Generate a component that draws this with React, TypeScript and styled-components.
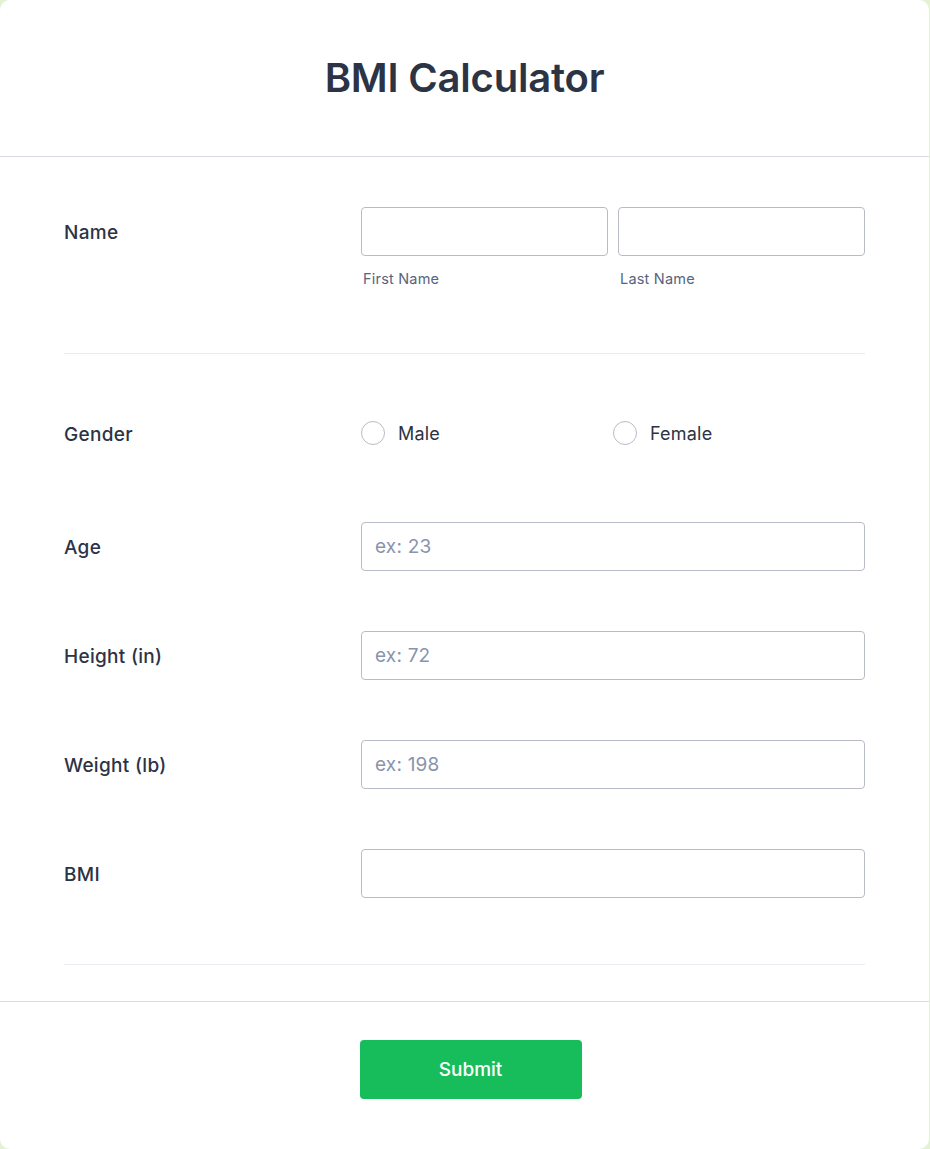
import React from "react";
import styled, { createGlobalStyle } from "styled-components";

const Global = createGlobalStyle`
  html, body { margin: 0; padding: 0; background: #e3f2d3; }
  body { font-family: Inter, "Noto Sans", sans-serif; color: #2c3345; }
  * { box-sizing: border-box; }
`;

const Card = styled.div`
  width: 929px;
  min-height: 1148px;
  background: #fff;
  border-radius: 10px;
  display: flex;
  flex-direction: column;
`;

const Header = styled.header`
  height: 157px;
  border-bottom: 1px solid #d8dae3;
  display: flex;
  align-items: center;
  justify-content: center;
`;

const Title = styled.h1`
  margin: 0 0 2px 0;
  font-size: 40px;
  font-weight: 600;
  color: #2c3345;
  letter-spacing: -0.2px;
`;

const Body = styled.div`
  padding: 50px 64px 0;
  display: flex;
  flex-direction: column;
`;

const Row = styled.div<{ $mt?: number }>`
  display: grid;
  grid-template-columns: 297px 504px;
  align-items: start;
  margin-top: ${(p) => p.$mt ?? 0}px;
`;

const Label = styled.label`
  font-size: 19px;
  font-weight: 500;
  letter-spacing: 0.3px;
  color: #2c3345;
  height: 48px;
  display: flex;
  align-items: center;
  padding-top: 2px;
`;

const Field = styled.div`
  display: flex;
  flex-direction: column;
`;

const Pair = styled.div`
  display: grid;
  grid-template-columns: 1fr 1fr;
  column-gap: 10px;
`;

const Input = styled.input`
  width: 100%;
  height: 49px;
  border: 1px solid #b8bcc6;
  border-radius: 4px;
  padding: 0 13px;
  font-family: Inter, sans-serif;
  font-size: 19px;
  letter-spacing: 0.2px;
  color: #2c3345;
  background: #fff;
  outline: none;
  &::placeholder { color: #8894ab; }
`;

const SubLabel = styled.span`
  margin-top: 14px;
  padding-left: 2px;
  font-size: 14.5px;
  letter-spacing: 0.2px;
  color: #57647e;
  line-height: 17px;
`;

const Divider = styled.hr<{ $mt: number }>`
  margin: ${(p) => p.$mt}px 0 0;
  border: none;
  border-top: 1px solid #eaebf0;
  height: 0;
`;

const Radios = styled.div`
  display: grid;
  grid-template-columns: 1fr 1fr;
  height: 48px;
  align-items: center;
`;

const RadioOption = styled.label`
  display: flex;
  align-items: center;
  gap: 13px;
  font-size: 18px;
  letter-spacing: 0.2px;
  color: #2c3345;
`;

const Circle = styled.span`
  width: 24px;
  height: 24px;
  border: 1px solid #b8bcc6;
  border-radius: 50%;
  background: #fff;
`;

const Footer = styled.div`
  margin-top: 36px;
  border-top: 1px solid #d8dae3;
  padding: 38px 0 50px 12px;
  display: flex;
  justify-content: center;
`;

const Submit = styled.button`
  width: 222px;
  height: 59px;
  border: none;
  border-radius: 4px;
  background: #18bd5b;
  color: #fff;
  font-family: Inter, sans-serif;
  font-size: 19px;
  font-weight: 500;
`;

const singles = [
  { label: "Age", ph: "ex: 23", mt: 65 },
  { label: "Height (in)", ph: "ex: 72", mt: 60 },
  { label: "Weight (lb)", ph: "ex: 198", mt: 60 },
  { label: "BMI", ph: "", mt: 60 },
];

export default function App() {
  return (
    <>
      <Global />
      <Card>
        <Header>
          <Title>BMI Calculator</Title>
        </Header>
        <Body>
          <Row>
            <Label>Name</Label>
            <Pair>
              <Field>
                <Input />
                <SubLabel>First Name</SubLabel>
              </Field>
              <Field>
                <Input />
                <SubLabel>Last Name</SubLabel>
              </Field>
            </Pair>
          </Row>
          <Divider $mt={66} />
          <Row $mt={55}>
            <Label>Gender</Label>
            <Radios>
              <RadioOption>
                <Circle />
                Male
              </RadioOption>
              <RadioOption>
                <Circle />
                Female
              </RadioOption>
            </Radios>
          </Row>
          {singles.map((s) => (
            <Row key={s.label} $mt={s.mt}>
              <Label>{s.label}</Label>
              <Input placeholder={s.ph} />
            </Row>
          ))}
          <Divider $mt={66} />
        </Body>
        <Footer>
          <Submit>Submit</Submit>
        </Footer>
      </Card>
    </>
  );
}
